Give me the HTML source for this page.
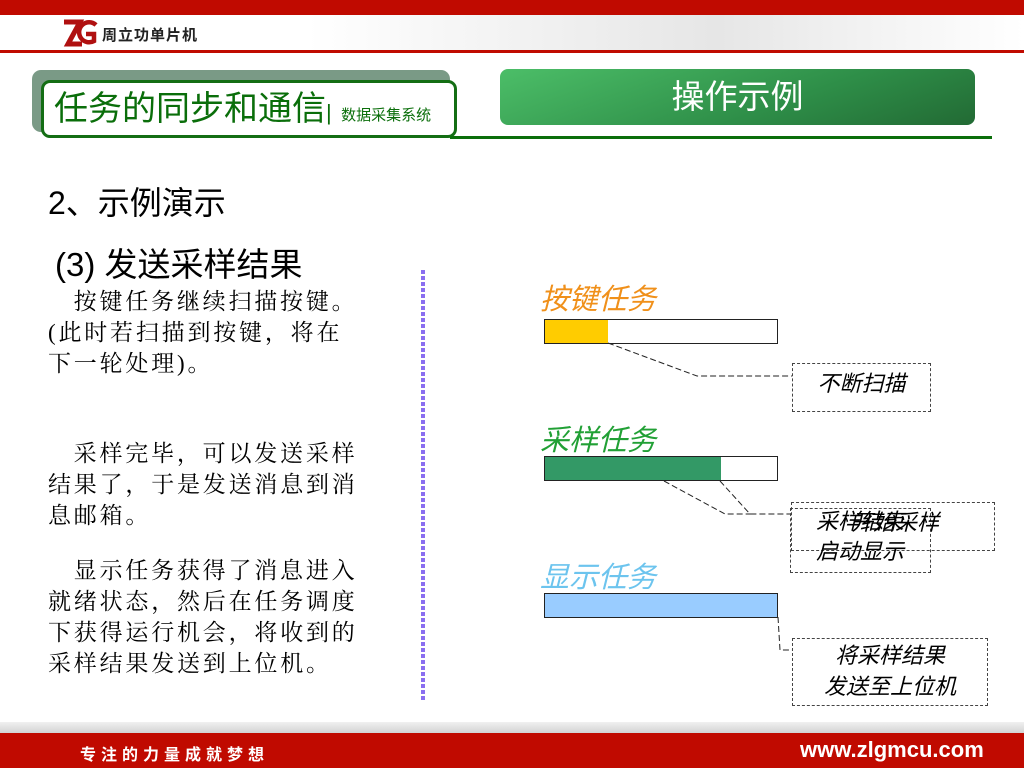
<!DOCTYPE html>
<html><head><meta charset="utf-8"><style>
*{margin:0;padding:0;box-sizing:border-box}
body{width:1024px;height:768px;position:relative;background:#fff;font-family:"Liberation Sans","Noto Sans CJK SC",sans-serif;overflow:hidden}
.a{position:absolute}
.p{font-family:"Liberation Serif","Noto Serif CJK SC",serif;font-size:23px;line-height:31px;color:#000;letter-spacing:2.8px;white-space:nowrap}
.it{font-style:italic;font-family:"Liberation Sans","Noto Sans CJK SC",sans-serif}
.db{border:1.5px dashed #444;}
</style></head><body>
<div class="a" style="left:0;top:0;width:1024px;height:15px;background:#c00a00"></div>
<div class="a" style="left:0;top:15px;width:1024px;height:35px;background:linear-gradient(90deg,#fff 0%,#fff 30%,#e6e6e6 70%,#fff 100%)"></div>
<div class="a" style="left:0;top:50px;width:1024px;height:3px;background:#c00a00"></div>
<svg class="a" style="left:60px;top:17px" width="40" height="32" viewBox="0 0 40 32">
<path d="M4 5 H20 L8 27 H22" fill="none" stroke="#b01010" stroke-width="5"/>
<path d="M36 8 A10 10 0 1 0 34 24 L34 17 H26" fill="none" stroke="#b01010" stroke-width="4.5"/>
</svg>
<div class="a" style="left:102px;top:24px;font-size:15px;font-weight:bold;color:#222;letter-spacing:1px">周立功单片机</div>

<div class="a" style="left:32px;top:70px;width:418px;height:62px;background:#7a9a86;border-radius:9px"></div>
<div class="a" style="left:41px;top:80px;width:416px;height:58px;background:#fff;border:3px solid #146e14;border-radius:9px"></div>
<div class="a" style="left:54px;top:87px;color:#0a6e0a;font-size:34px;white-space:nowrap;line-height:44px">任务的同步和通信<span style="font-size:22px">|</span> <span style="font-size:15px">数据采集系统</span></div>

<div class="a" style="left:500px;top:69px;width:475px;height:56px;border-radius:8px;background:linear-gradient(160deg,#4cbe68,#2e8e48 60%,#226a34);color:#fff;font-size:33px;text-align:center;line-height:56px">操作示例</div>
<div class="a" style="left:450px;top:136px;width:542px;height:3px;background:#0a6e0a"></div>

<div class="a" style="left:48px;top:178px;font-size:32px;color:#000">2、示例演示</div>
<div class="a" style="left:55px;top:238px;font-size:33px;color:#000">(3) 发送采样结果</div>

<div class="a p" style="left:48px;top:286px">&nbsp;&nbsp;&nbsp;按键任务继续扫描按键。<br>(此时若扫描到按键，将在<br>下一轮处理)。</div>
<div class="a p" style="left:48px;top:438px">&nbsp;&nbsp;&nbsp;采样完毕，可以发送采样<br>结果了，于是发送消息到消<br>息邮箱。</div>
<div class="a p" style="left:48px;top:555px">&nbsp;&nbsp;&nbsp;显示任务获得了消息进入<br>就绪状态，然后在任务调度<br>下获得运行机会，将收到的<br>采样结果发送到上位机。</div>

<div class="a" style="left:421px;top:270px;width:4px;height:430px;background:repeating-linear-gradient(180deg,#8a6ef0 0 4px,#fff 4px 6px)"></div>

<div class="a it" style="left:540px;top:276px;font-size:29px;color:#f0901a">按键任务</div>
<div class="a" style="left:544px;top:319px;width:234px;height:25px;border:1px solid #222;background:linear-gradient(90deg,#ffcc00 0 63px,#fff 63px)"></div>
<div class="a it" style="left:540px;top:417px;font-size:29px;color:#21a035">采样任务</div>
<div class="a" style="left:544px;top:456px;width:234px;height:25px;border:1px solid #222;background:linear-gradient(90deg,#339966 0 176px,#fff 176px)"></div>
<div class="a it" style="left:540px;top:554px;font-size:29px;color:#6cc4ee">显示任务</div>
<div class="a" style="left:544px;top:593px;width:234px;height:25px;border:1px solid #222;background:#99ccff"></div>

<svg class="a" style="left:0;top:0" width="1024" height="768">
<g fill="none" stroke="#222" stroke-width="1" stroke-dasharray="6,3">
<path d="M608 343 L697 376 H792"/>
<path d="M664 481 L725 514 H752 M720 481 L750 514 H790"/>
<path d="M778 617 L780 650 H792"/>
</g></svg>
<div class="a db" style="left:792px;top:363px;width:139px;height:49px"></div>
<div class="a it" style="left:792px;top:366px;width:139px;text-align:center;font-size:22px">不断扫描</div>
<div class="a db" style="left:791px;top:502px;width:204px;height:49px"></div>
<div class="a db" style="left:790px;top:508px;width:141px;height:65px"></div>
<div class="a it" style="left:816px;top:507px;font-size:22px;line-height:30px">采样结束<br>启动显示</div>
<div class="a it" style="left:851px;top:505px;font-size:22px">开始采样</div>
<div class="a db" style="left:792px;top:638px;width:196px;height:68px"></div>
<div class="a it" style="left:792px;top:640px;width:196px;text-align:center;font-size:22px;line-height:31px">将采样结果<br>发送至上位机</div>

<div class="a" style="left:0;top:722px;width:1024px;height:12px;background:linear-gradient(180deg,#f0f0f0,#d0d0d0)"></div>
<div class="a" style="left:0;top:733px;width:1024px;height:35px;background:#c00a00"></div>
<div class="a" style="left:80px;top:741px;font-size:16px;font-weight:bold;color:#fff;letter-spacing:5px">专注的力量成就梦想</div>
<div class="a" style="left:800px;top:737px;font-size:22px;font-weight:bold;color:#fff">www.zlgmcu.com</div>
</body></html>
